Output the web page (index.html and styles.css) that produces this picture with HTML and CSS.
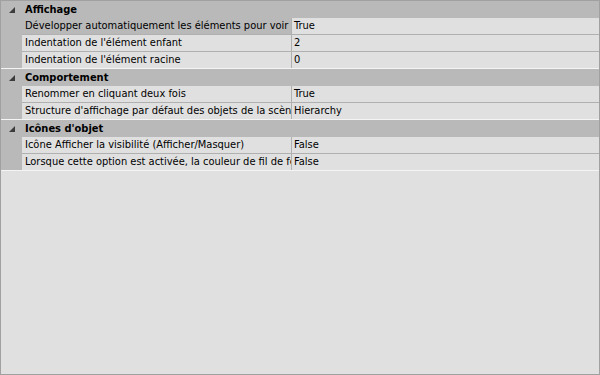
FILE: index.html
```html
<!DOCTYPE html>
<html lang="fr">
<head>
<meta charset="utf-8">
<title>Propriétés</title>
<link rel="stylesheet" href="styles.css">
</head>
<body>
<div class="grid">
  <div class="group">
    <div class="cat"><span class="toggle"><svg width="21" height="16" viewBox="0 0 21 16"><polygon points="14,5 14,11 8,11" fill="#3c3c3c"/></svg></span><span class="cat-label">Affichage</span></div>
    <div class="row"><div class="name selected">Développer automatiquement les éléments pour voir</div><div class="value">True</div></div>
    <div class="row"><div class="name">Indentation de l'élément enfant</div><div class="value">2</div></div>
    <div class="row"><div class="name">Indentation de l'élément racine</div><div class="value">0</div></div>
  </div>
  <div class="group">
    <div class="cat"><span class="toggle"><svg width="21" height="16" viewBox="0 0 21 16"><polygon points="14,5 14,11 8,11" fill="#3c3c3c"/></svg></span><span class="cat-label">Comportement</span></div>
    <div class="row"><div class="name">Renommer en cliquant deux fois</div><div class="value">True</div></div>
    <div class="row"><div class="name">Structure d'affichage par défaut des objets de la scène</div><div class="value">Hierarchy</div></div>
  </div>
  <div class="group">
    <div class="cat"><span class="toggle"><svg width="21" height="16" viewBox="0 0 21 16"><polygon points="14,5 14,11 8,11" fill="#3c3c3c"/></svg></span><span class="cat-label">Icônes d'objet</span></div>
    <div class="row"><div class="name">Icône Afficher la visibilité (Afficher/Masquer)</div><div class="value">False</div></div>
    <div class="row"><div class="name">Lorsque cette option est activée, la couleur de fil de fer</div><div class="value">False</div></div>
  </div>
</div>
</body>
</html>
```
FILE: styles.css
```css
html, body {
  margin: 0;
  padding: 0;
}
body {
  width: 600px;
  height: 375px;
  font-family: "DejaVu Sans Condensed", "DejaVu Sans", "Liberation Sans", sans-serif;
  font-stretch: condensed;
  font-size: 11px;
  color: #000;
}
.grid {
  box-sizing: border-box;
  width: 600px;
  height: 375px;
  border: 1px solid #a0a0a0;
  background: #e0e0e0;
  overflow: hidden;
}
.group {
  background: #b9b9b9;
  border-bottom: 1px solid #f4f4f4;
}
.cat {
  display: flex;
  align-items: center;
  height: 17px;
  font-weight: bold;
}
.toggle {
  width: 21px;
  height: 16px;
  display: flex;
}
.cat-label {
  padding-left: 3px;
}
.row {
  display: flex;
  margin-left: 21px;
  height: 16px;
  border-bottom: 1px solid #b0b0b0;
  background: #e0e0e0;
}
.row:last-child {
  border-bottom: none;
}
.name {
  box-sizing: border-box;
  width: 270px;
  flex: none;
  padding-left: 3px;
  line-height: 16px;
  white-space: nowrap;
  overflow: hidden;
  text-overflow: clip;
  border-right: 1px solid #b0b0b0;
}
.name.selected {
  background: #b9b9b9;
}
.value {
  flex: 1;
  padding-left: 2px;
  line-height: 16px;
  white-space: nowrap;
  overflow: hidden;
}
```
